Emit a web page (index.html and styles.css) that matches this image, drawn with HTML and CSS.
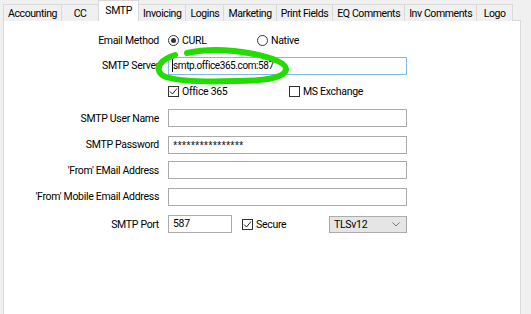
FILE: index.html
```html
<!DOCTYPE html>
<html>
<head>
<title>Settings - SMTP</title>
<meta charset="UTF-8">
<link rel="stylesheet" href="styles.css">
</head>
<body>
<div id="window">

	<div class="tabs">
		<div class="tab">Accounting</div>
		<div class="tab">CC</div>
		<div class="tab active">SMTP</div>
		<div class="tab">Invoicing</div>
		<div class="tab">Logins</div>
		<div class="tab">Marketing</div>
		<div class="tab">Print Fields</div>
		<div class="tab">EQ Comments</div>
		<div class="tab">Inv Comments</div>
		<div class="tab">Logo</div>
	</div>

	<div class="panel">
		<div class="form">
			<div class="label">Email Method</div>
			<div class="controls">
				<span class="radio wide"><span class="circle on"></span>CURL</span>
				<span class="radio"><span class="circle"></span>Native</span>
			</div>

			<div class="label">SMTP Server</div>
			<div class="controls">
				<div class="field focus"><span class="caret"></span>smtp.office365.com:587</div>
			</div>

			<div class="label"></div>
			<div class="controls">
				<span class="check office"><span class="box"><svg width="9" height="9" viewBox="0 0 9 9"><path d="M1 4.5 L3.5 7 L8 1.5" fill="none" stroke="#222" stroke-width="1"/></svg></span>Office 365</span>
				<span class="check"><span class="box"></span>MS Exchange</span>
			</div>

			<div class="label">SMTP User Name</div>
			<div class="controls"><div class="field"></div></div>

			<div class="label">SMTP Password</div>
			<div class="controls"><div class="field pass">****************</div></div>

			<div class="label">'From' EMail Address</div>
			<div class="controls"><div class="field"></div></div>

			<div class="label">'From' Mobile Email Address</div>
			<div class="controls"><div class="field"></div></div>

			<div class="label">SMTP Port</div>
			<div class="controls">
				<div class="field port">587</div>
				<span class="check secure"><span class="box"><svg width="9" height="9" viewBox="0 0 9 9"><path d="M1 4.5 L3.5 7 L8 1.5" fill="none" stroke="#222" stroke-width="1"/></svg></span>Secure</span>
				<div class="select">TLSv12<svg width="8" height="5" viewBox="0 0 8 5"><path d="M0.5 0.5 L4 4 L7.5 0.5" fill="none" stroke="#777" stroke-width="1"/></svg></div>
			</div>
		</div>

		<!-- green marker scribble drawn over the server box -->
		<svg class="scribble" width="140" height="40" viewBox="0 0 140 40">
			<path d="M33 7 C50 3 75 3 100 8 C118 12 133 17 132 24 C130 32 110 35 82 35 C55 36 25 35 12 31 C4 28 3 22 7 17 C10 13 15 11 21 9" fill="none" stroke="#22dd00" stroke-width="6" stroke-linecap="round"/>
		</svg>
	</div>

</div>
</body>
</html>
```

FILE: styles.css
```css
html, body {
	margin: 0;
	padding: 0;
	background-color: #f0f0f0;
	font-family: Roboto, "Noto Sans", sans-serif;
	font-size: 10.5px;
	letter-spacing: -0.3px;
	color: #000;
}

#window {
	width: 531px;
	height: 314px;
	overflow: hidden;
}

/**************************
/******TABS
/**/
.tabs {
	display: flex;
	align-items: flex-end;
	height: 21px;
	margin-left: 3px;
	position: relative;
	z-index: 2;
}

.tab {
	box-sizing: border-box;
	min-width: 37px;
	height: 17px;
	line-height: 17px;
	padding: 0 4px;
	text-align: center;
	letter-spacing: -0.4px;
	border: 1px solid #d9d9d9;
	border-bottom: none;
	border-right: none;
	background-color: #f0f0f0;
	white-space: nowrap;
}

.tab:last-child {
	border-right: 1px solid #d9d9d9;
}

.tab.active {
	min-width: 41px;
	height: 21px;
	line-height: 19px;
	padding: 0 6px;
	background-color: #fff;
	border-right: 1px solid #d9d9d9;
}

.tab.active + .tab {
	border-left: none;
}

/**************************
/******PANEL
/**/
.panel {
	position: relative;
	margin-left: 3px;
	margin-top: -1px;
	width: 518px;
	height: 300px;
	box-sizing: border-box;
	background-color: #fff;
	border: 1px solid #d9d9d9;
}

.form {
	display: grid;
	grid-template-columns: 155px 239px;
	grid-template-rows: 26px 25.5px 26px 27px 26px 25.5px 27px 28px;
	column-gap: 9px;
	padding-top: 6px;
	align-items: center;
}

.label {
	text-align: right;
	white-space: nowrap;
}

.controls {
	display: flex;
	align-items: center;
}

.field {
	box-sizing: border-box;
	width: 239px;
	height: 18px;
	border: 1px solid #ababab;
	padding: 0 4px;
	line-height: 16px;
	white-space: nowrap;
}

.field.focus {
	border-color: #80b9ee;
	padding-left: 3px;
	display: flex;
	align-items: center;
	font-size: 10px;
	letter-spacing: -0.4px;
}

.caret {
	display: inline-block;
	width: 1px;
	height: 13px;
	background-color: #000;
}

.field.pass {
	font-family: "Noto Sans", sans-serif;
	font-size: 8px;
	letter-spacing: 0;
}

.field.port {
	width: 64px;
}

.radio, .check {
	display: inline-flex;
	align-items: center;
}

.radio.wide {
	width: 89px;
}

.circle {
	box-sizing: border-box;
	width: 11px;
	height: 11px;
	border: 1px solid #333;
	border-radius: 50%;
	margin-right: 3px;
	display: inline-flex;
	align-items: center;
	justify-content: center;
}

.circle.on::after {
	content: "";
	width: 5px;
	height: 5px;
	border-radius: 50%;
	background-color: #333;
}

.box {
	box-sizing: border-box;
	width: 11px;
	height: 11px;
	border: 1px solid #333;
	margin-right: 3px;
	display: inline-flex;
	align-items: center;
	justify-content: center;
}

.check.office {
	width: 121px;
}

.check.secure {
	margin-left: 10px;
	width: 87px;
}

.select {
	box-sizing: border-box;
	width: 78px;
	height: 17px;
	background-color: #e5e5e5;
	border: 1px solid #acacac;
	display: flex;
	align-items: center;
	justify-content: space-between;
	padding: 0 6px 0 4px;
}

.scribble {
	position: absolute;
	left: 150px;
	top: 25px;
}
```
